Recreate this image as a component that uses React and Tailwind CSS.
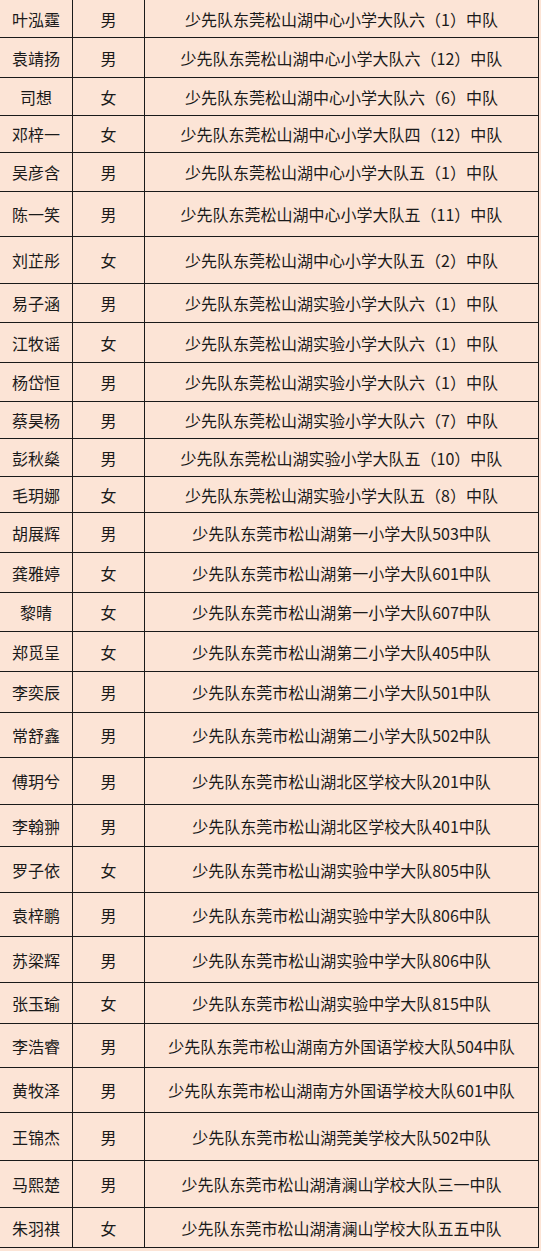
import React from "react";

const rows = [
  ["叶泓霆", "男", "少先队东莞松山湖中心小学大队六（1）中队", "h-[38px]"],
  ["袁靖扬", "男", "少先队东莞松山湖中心小学大队六（12）中队", "h-[40px]"],
  ["司想", "女", "少先队东莞松山湖中心小学大队六（6）中队", "h-[38px]"],
  ["邓梓一", "女", "少先队东莞松山湖中心小学大队四（12）中队", "h-[37px]"],
  ["吴彦含", "男", "少先队东莞松山湖中心小学大队五（1）中队", "h-[39px]"],
  ["陈一笑", "男", "少先队东莞松山湖中心小学大队五（11）中队", "h-[45px]"],
  ["刘芷彤", "女", "少先队东莞松山湖中心小学大队五（2）中队", "h-[47px]"],
  ["易子涵", "男", "少先队东莞松山湖实验小学大队六（1）中队", "h-[39px]"],
  ["江牧谣", "女", "少先队东莞松山湖实验小学大队六（1）中队", "h-[40px]"],
  ["杨岱恒", "男", "少先队东莞松山湖实验小学大队六（1）中队", "h-[39px]"],
  ["蔡昊杨", "男", "少先队东莞松山湖实验小学大队六（7）中队", "h-[37px]"],
  ["彭秋燊", "男", "少先队东莞松山湖实验小学大队五（10）中队", "h-[38px]"],
  ["毛玥娜", "女", "少先队东莞松山湖实验小学大队五（8）中队", "h-[36px]"],
  ["胡展辉", "男", "少先队东莞市松山湖第一小学大队503中队", "h-[40px]"],
  ["龚雅婷", "女", "少先队东莞市松山湖第一小学大队601中队", "h-[40px]"],
  ["黎晴", "女", "少先队东莞市松山湖第一小学大队607中队", "h-[39px]"],
  ["郑觅呈", "女", "少先队东莞市松山湖第二小学大队405中队", "h-[40px]"],
  ["李奕辰", "男", "少先队东莞市松山湖第二小学大队501中队", "h-[41px]"],
  ["常舒鑫", "男", "少先队东莞市松山湖第二小学大队502中队", "h-[45px]"],
  ["傅玥兮", "男", "少先队东莞市松山湖北区学校大队201中队", "h-[47px]"],
  ["李翰翀", "男", "少先队东莞市松山湖北区学校大队401中队", "h-[42px]"],
  ["罗子依", "女", "少先队东莞市松山湖实验中学大队805中队", "h-[46px]"],
  ["袁梓鹏", "男", "少先队东莞市松山湖实验中学大队806中队", "h-[44px]"],
  ["苏梁辉", "男", "少先队东莞市松山湖实验中学大队806中队", "h-[46px]"],
  ["张玉瑜", "女", "少先队东莞市松山湖实验中学大队815中队", "h-[41px]"],
  ["李浩睿", "男", "少先队东莞市松山湖南方外国语学校大队504中队", "h-[44px]"],
  ["黄牧泽", "男", "少先队东莞市松山湖南方外国语学校大队601中队", "h-[45px]"],
  ["王锦杰", "男", "少先队东莞市松山湖莞美学校大队502中队", "h-[48px]"],
  ["马熙楚", "男", "少先队东莞市松山湖清澜山学校大队三一中队", "h-[47px]"],
  ["朱羽祺", "女", "少先队东莞市松山湖清澜山学校大队五五中队", "h-[40px]"],
];

export default function App() {
  return (
    <div
      className="min-h-screen w-[541px] bg-[#fce4d6] text-[16px] leading-none text-[#1a1a1a]"
      style={{ fontFamily: '"Noto Sans CJK SC", "Noto Sans", sans-serif' }}
    >
      <div className="flex w-[539px] flex-col border-r border-[#1a1a1a]">
        {rows.map(([name, sex, unit, h], i) => (
          <div
            key={i}
            className={`grid grid-cols-[73px_72px_1fr] border-b border-[#1a1a1a] ${h}`}
          >
            <div className="flex items-center justify-center border-r border-[#1a1a1a]">
              {name}
            </div>
            <div className="flex items-center justify-center border-r border-[#1a1a1a]">
              {sex}
            </div>
            <div className="flex items-center justify-center whitespace-nowrap">
              {unit}
            </div>
          </div>
        ))}
      </div>
    </div>
  );
}
